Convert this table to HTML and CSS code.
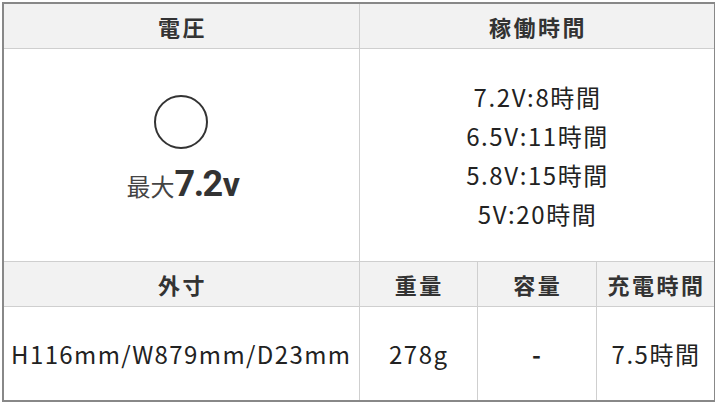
FILE: index.html
```html
<!DOCTYPE html>
<html lang="ja">
<head>
<meta charset="utf-8">
<link rel="stylesheet" href="styles.css">
</head>
<body>
<table class="spec">
  <colgroup>
    <col class="c1"><col class="c2"><col class="c3"><col class="c4">
  </colgroup>
  <tr class="head">
    <th>電圧</th>
    <th colspan="3">稼働時間</th>
  </tr>
  <tr class="main">
    <td>
      <div class="volt">
        <svg class="circle" width="56" height="56" viewBox="0 0 56 56"><circle cx="28" cy="28" r="26" fill="none" stroke="#333" stroke-width="2"/></svg>
        <div class="max"><span class="jp">最大</span><span class="num">7.2</span><span class="unit">v</span></div>
      </div>
    </td>
    <td colspan="3" class="times">
      <div>7.2V:8時間</div>
      <div>6.5V:11時間</div>
      <div>5.8V:15時間</div>
      <div>5V:20時間</div>
    </td>
  </tr>
  <tr class="head">
    <th>外寸</th>
    <th>重量</th>
    <th>容量</th>
    <th>充電時間</th>
  </tr>
  <tr class="vals">
    <td class="dims">H116mm/W879mm/D23mm</td>
    <td>278g</td>
    <td class="dash">-</td>
    <td>7.5時間</td>
  </tr>
</table>
</body>
</html>
```

FILE: styles.css
```css
html, body {
  margin: 0;
  padding: 0;
  background: #fff;
}
body {
  padding: 2px 1px 0 2px;
  font-family: "Noto Sans CJK JP", "Noto Sans", sans-serif;
  color: #222;
}
.spec {
  width: 712px;
  border-collapse: collapse;
  table-layout: fixed;
  border: 2px solid #888;
}
.c1 { width: 356px; }
.c2 { width: 118px; }
.c3 { width: 119px; }
.c4 { width: 119px; }
.spec th, .spec td {
  border: 1px solid #cfcfcf;
  padding: 0;
  text-align: center;
  vertical-align: middle;
  white-space: nowrap;
}
.head th {
  background: #f2f2f2;
  height: 44px;
  font-size: 22px;
  font-weight: 700;
  color: #333;
  letter-spacing: 2.5px;
  text-indent: 2.5px;
}
.main td {
  height: 212px;
}
.volt {
  display: flex;
  flex-direction: column;
  align-items: center;
  gap: 16px;
  margin-top: -14px;
}
.circle { display: block; }
.max {
  display: flex;
  align-items: baseline;
  color: #333;
  margin-left: 4px;
}
.max .jp {
  font-size: 24px;
  font-weight: 400;
  color: #444;
}
.max .num {
  font-family: Roboto, "Noto Sans", sans-serif;
  font-size: 36px;
  font-weight: 700;
  letter-spacing: -1.5px;
  line-height: 1;
}
.max .unit {
  font-family: Roboto, "Noto Sans", sans-serif;
  font-size: 34px;
  font-weight: 700;
  line-height: 1;
  margin-left: 1px;
}
.times {
  font-size: 24px;
  line-height: 39px;
  color: #222;
  padding-bottom: 4px;
}
.times div {
  letter-spacing: 1.6px;
  text-indent: 1.6px;
}
.vals td {
  height: 93px;
  font-size: 24px;
  color: #222;
  letter-spacing: 1.5px;
  text-indent: 1.5px;
}
.vals td.dims {
  letter-spacing: 1.4px;
  text-indent: 0;
}
.vals td.dash {
  font-weight: 700;
}
```
